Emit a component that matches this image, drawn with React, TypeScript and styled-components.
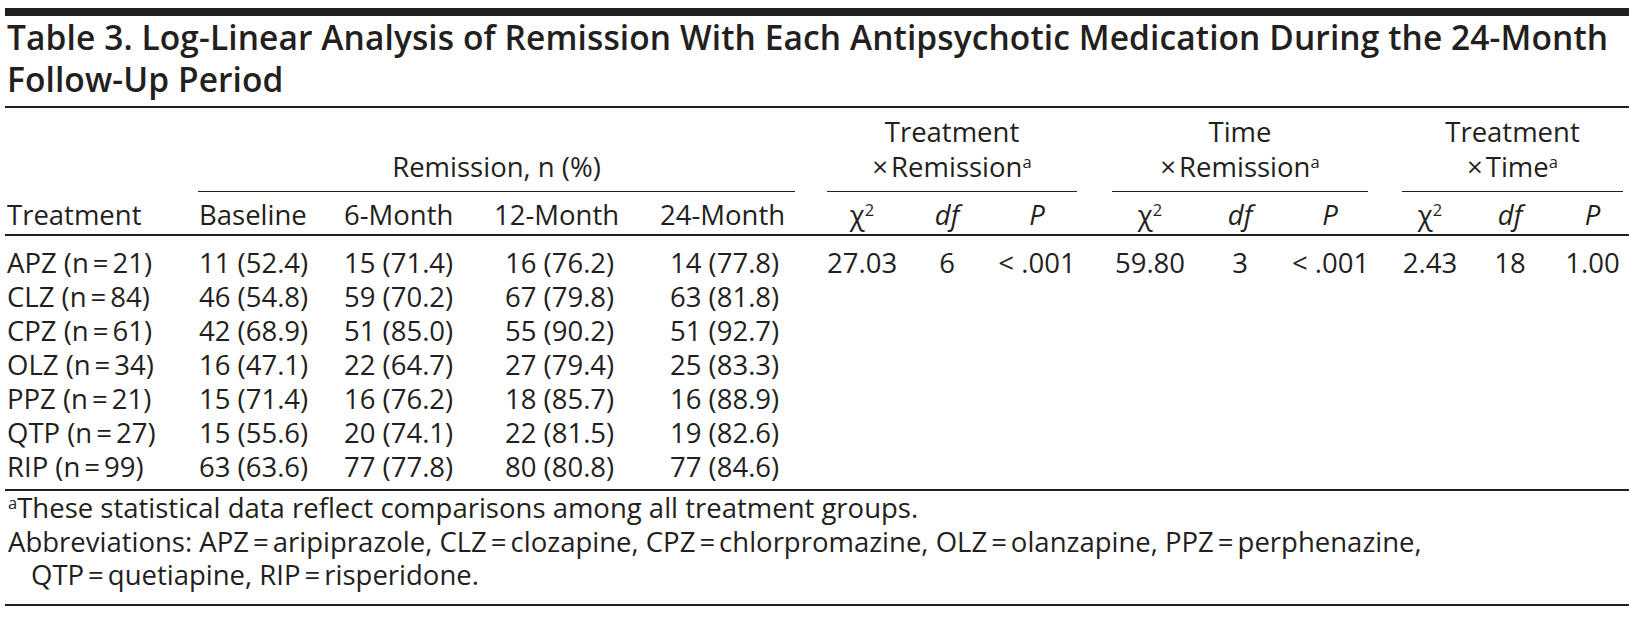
import React from "react";
import styled, { createGlobalStyle } from "styled-components";

const INK = "#231f20";
const COLS =
  "193px 142px 135px 175px 145px 32px 70px 100px 80px 35px 76px 104px 76px 34px 56px 104px 61px";

const GlobalStyle = createGlobalStyle`
  html, body { margin: 0; padding: 0; background: #ffffff; }
  body { font-family: "Open Sans", "Noto Sans", sans-serif; color: ${INK}; }
`;

const Page = styled.div`
  padding: 8px 6px 0 5px;
  font-size: 27.5px;
`;

const TopBar = styled.div`
  height: 8px;
  background: ${INK};
`;

const Title = styled.h1`
  margin: 0;
  padding: 0 0 6px 2px;
  font-size: 33.5px;
  font-weight: 600;
  line-height: 42px;
  letter-spacing: 0.1px;
  border-bottom: 2px solid ${INK};
`;

const HeadGrid = styled.div`
  display: grid;
  grid-template-columns: ${COLS};
  padding-top: 6px;
  border-bottom: 2px solid ${INK};
`;

const GroupHead = styled.div<{ $col: string }>`
  grid-column: ${(p) => p.$col};
  grid-row: 1;
  align-self: end;
  text-align: center;
  line-height: 35px;
  padding-bottom: 7px;
  border-bottom: 1.5px solid ${INK};
  white-space: nowrap;
`;

const SubHead = styled.div<{ $col: number; $pl?: number; $center?: boolean }>`
  grid-column: ${(p) => p.$col};
  grid-row: 2;
  line-height: 34px;
  padding: 6px 0 2px ${(p) => p.$pl ?? 0}px;
  text-align: ${(p) => (p.$center ? "center" : "left")};
  white-space: nowrap;
`;

const Ital = styled.i`
  font-style: italic;
`;

const Sup = styled.sup`
  font-size: 0.6em;
  line-height: 0;
  vertical-align: 0.55em;
`;

const Times = styled.span`
  margin-right: 3px;
`;

const Eq = styled.span`
  margin: 0 4px;
`;

const Body = styled.div`
  display: grid;
  grid-template-columns: ${COLS};
  grid-auto-rows: 34px;
  padding: 10px 0 5px;
  border-bottom: 2px solid ${INK};
`;

const Cell = styled.div<{ $pl?: number; $center?: boolean }>`
  line-height: 34px;
  padding-left: ${(p) => p.$pl ?? 0}px;
  text-align: ${(p) => (p.$center ? "center" : "left")};
  white-space: nowrap;
`;

const Notes = styled.div`
  padding: 0 0 12px 3px;
  line-height: 33.5px;
  border-bottom: 2px solid ${INK};
`;

const Note = styled.p<{ $hang?: boolean }>`
  margin: 0;
  padding-left: ${(p) => (p.$hang ? 23 : 0)}px;
  text-indent: ${(p) => (p.$hang ? -23 : 0)}px;
`;

type Col = { pl: number; center?: boolean };
const dataCols: Col[] = [
  { pl: 2 },
  { pl: 1 },
  { pl: 4 },
  { pl: 30 },
  { pl: 20 },
  { pl: 0 },
  { pl: 0, center: true },
  { pl: 0, center: true },
  { pl: 0, center: true },
  { pl: 0 },
  { pl: 0, center: true },
  { pl: 0, center: true },
  { pl: 0, center: true },
  { pl: 0 },
  { pl: 0, center: true },
  { pl: 0, center: true },
  { pl: 0, center: true },
];

const rows: string[][] = [
  ["APZ", "21", "11 (52.4)", "15 (71.4)", "16 (76.2)", "14 (77.8)"],
  ["CLZ", "84", "46 (54.8)", "59 (70.2)", "67 (79.8)", "63 (81.8)"],
  ["CPZ", "61", "42 (68.9)", "51 (85.0)", "55 (90.2)", "51 (92.7)"],
  ["OLZ", "34", "16 (47.1)", "22 (64.7)", "27 (79.4)", "25 (83.3)"],
  ["PPZ", "21", "15 (71.4)", "16 (76.2)", "18 (85.7)", "16 (88.9)"],
  ["QTP", "27", "15 (55.6)", "20 (74.1)", "22 (81.5)", "19 (82.6)"],
  ["RIP", "99", "63 (63.6)", "77 (77.8)", "80 (80.8)", "77 (84.6)"],
];

const stats = ["", "27.03", "6", "< .001", "", "59.80", "3", "< .001", "", "2.43", "18", "1.00"];

const abbreviations: [string, string][] = [
  ["APZ", "aripiprazole"],
  ["CLZ", "clozapine"],
  ["CPZ", "chlorpromazine"],
  ["OLZ", "olanzapine"],
  ["PPZ", "perphenazine"],
];

const statHeads = (start: number) => [
  <SubHead key={`c${start}`} $col={start} $center>
    χ<Sup>2</Sup>
  </SubHead>,
  <SubHead key={`d${start}`} $col={start + 1} $center>
    <Ital>df</Ital>
  </SubHead>,
  <SubHead key={`p${start}`} $col={start + 2} $center>
    <Ital>P</Ital>
  </SubHead>,
];

const Abbr = ({ a, b, end }: { a: string; b: string; end: string }) => (
  <>
    {a}
    <Eq>=</Eq>
    {b}
    {end}
  </>
);

export default function App() {
  return (
    <Page>
      <GlobalStyle />
      <TopBar />
      <Title>
        Table 3. Log-Linear Analysis of Remission With Each Antipsychotic Medication During the 24-Month
        Follow-Up Period
      </Title>

      <HeadGrid>
        <GroupHead $col="2 / span 4">Remission, n (%)</GroupHead>
        <GroupHead $col="7 / span 3">
          Treatment
          <br />
          <Times>×</Times>Remission<Sup>a</Sup>
        </GroupHead>
        <GroupHead $col="11 / span 3">
          Time
          <br />
          <Times>×</Times>Remission<Sup>a</Sup>
        </GroupHead>
        <GroupHead $col="15 / span 3">
          Treatment
          <br />
          <Times>×</Times>Time<Sup>a</Sup>
        </GroupHead>

        <SubHead $col={1} $pl={2}>Treatment</SubHead>
        <SubHead $col={2} $pl={1}>Baseline</SubHead>
        <SubHead $col={3} $pl={4}>6-Month</SubHead>
        <SubHead $col={4} $pl={19}>12-Month</SubHead>
        <SubHead $col={5} $pl={10}>24-Month</SubHead>
        {statHeads(7)}
        {statHeads(11)}
        {statHeads(15)}
      </HeadGrid>

      <Body>
        {rows.map((r, ri) => {
          const cells: React.ReactNode[] = [
            <>
              {r[0]} (n<Eq>=</Eq>
              {r[1]})
            </>,
            r[2],
            r[3],
            r[4],
            r[5],
            ...(ri === 0 ? stats : stats.map(() => "")),
          ];
          return cells.map((c, ci) => (
            <Cell key={`${ri}-${ci}`} $pl={dataCols[ci].pl} $center={dataCols[ci].center}>
              {c}
            </Cell>
          ));
        })}
      </Body>

      <Notes>
        <Note>
          <Sup>a</Sup>These statistical data reflect comparisons among all treatment groups.
        </Note>
        <Note $hang>
          Abbreviations:{" "}
          {abbreviations.map(([a, b]) => (
            <React.Fragment key={a}>
              <Abbr a={a} b={b} end="," />{" "}
            </React.Fragment>
          ))}
          <br />
          <Abbr a="QTP" b="quetiapine" end="," /> <Abbr a="RIP" b="risperidone" end="." />
        </Note>
      </Notes>
    </Page>
  );
}
